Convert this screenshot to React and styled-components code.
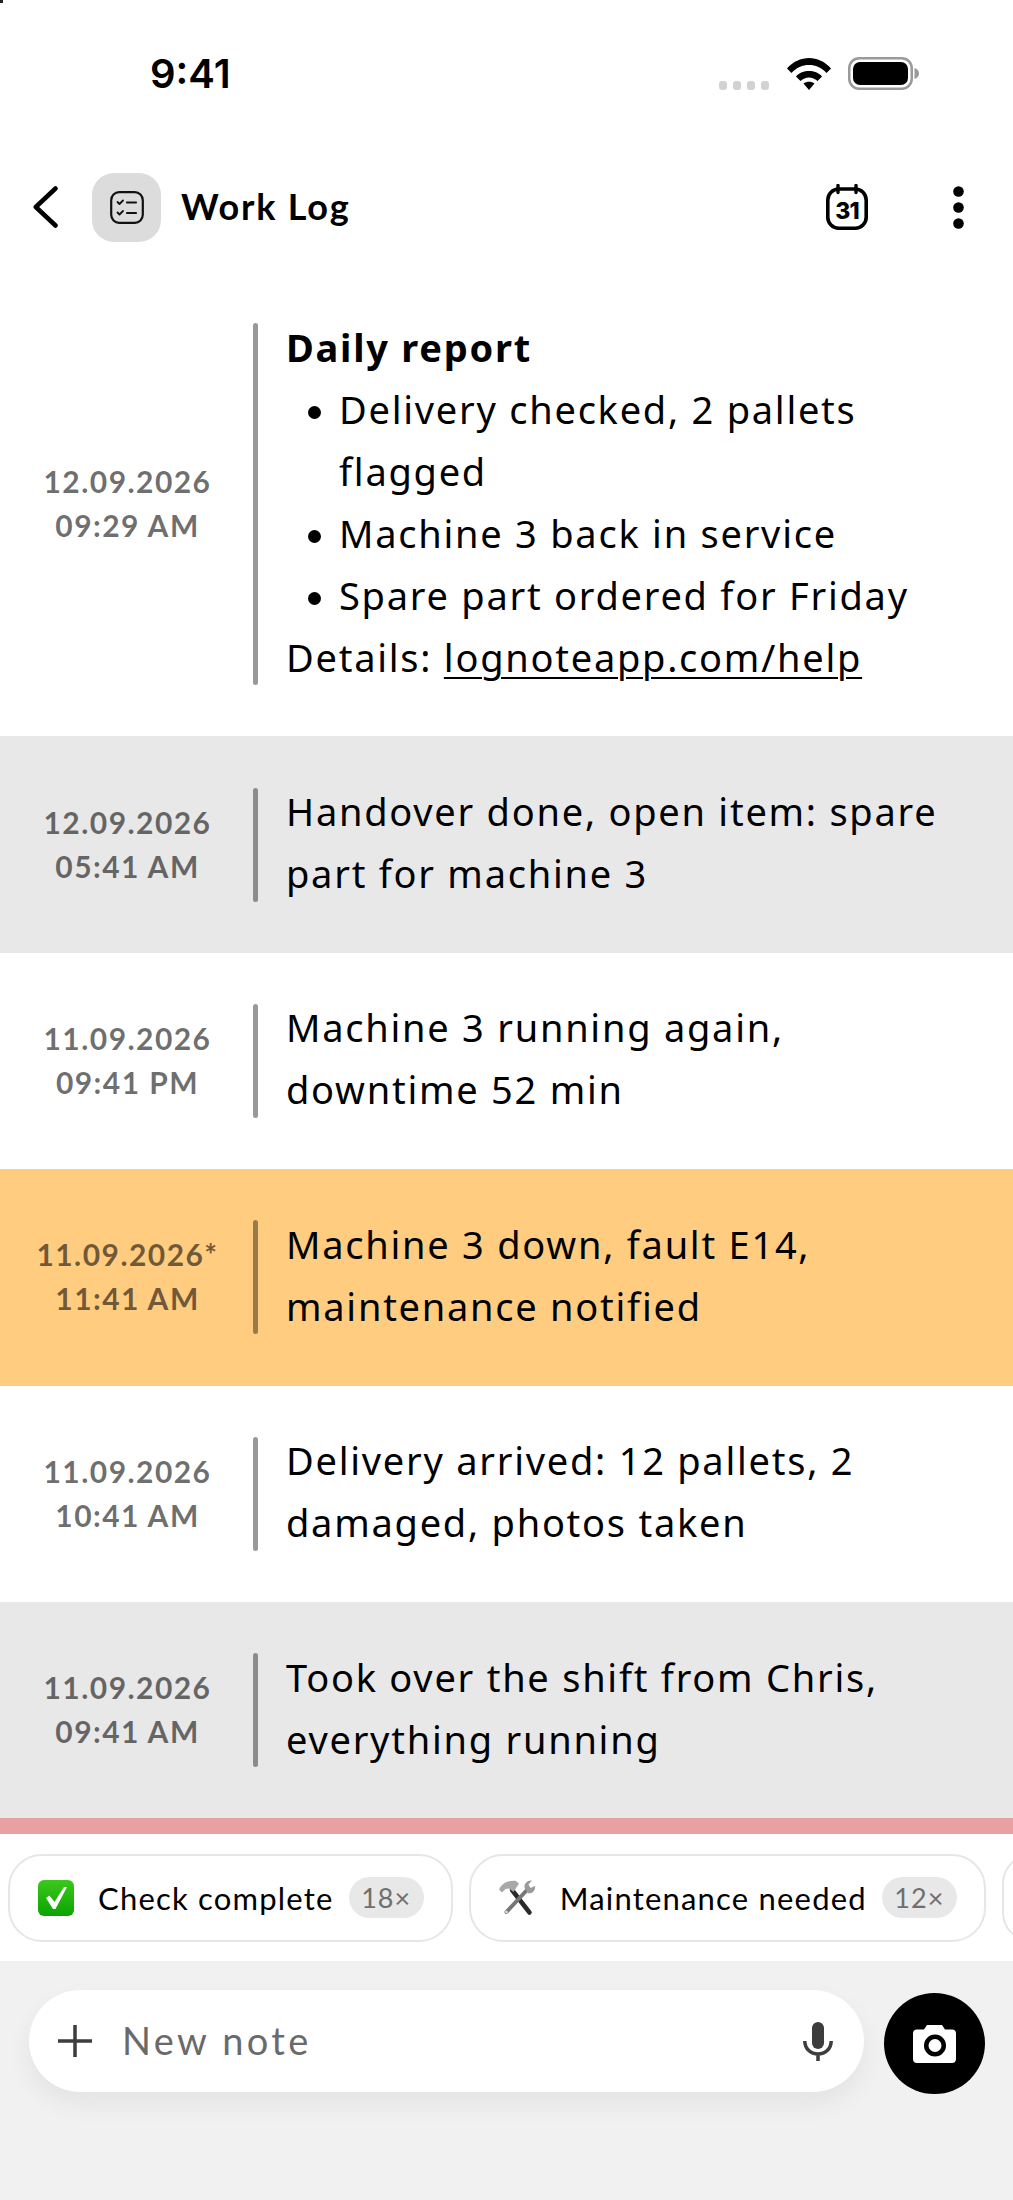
import React from 'react';
import styled, { createGlobalStyle } from 'styled-components';

const font = `Lato, "Noto Sans", sans-serif`;

const Global = createGlobalStyle`
  html, body { margin: 0; padding: 0; background: #f1f1f1; }
  body { font-family: ${font}; color: #000; }
`;

const Page = styled.div`
  position: relative;
  width: 1013px;
  height: 2200px;
  display: flex;
  flex-direction: column;
  overflow: hidden;
  background: #fff;
  &::before {
    content: '';
    position: absolute;
    top: 0;
    left: 0;
    width: 3px;
    height: 3px;
    background: #222;
  }
`;

const StatusBar = styled.div`
  height: 142px;
  box-sizing: border-box;
  padding: 50px 94px 0 150px;
  display: flex;
  justify-content: space-between;
  align-items: flex-start;
`;

const Clock = styled.div`
  font-family: Inter, sans-serif;
  font-weight: 600;
  font-size: 40px;
  line-height: 48px;
  width: 80px;
  white-space: nowrap;
`;

const StatusIcons = styled.div`
  display: flex;
  align-items: flex-start;
  gap: 17px;
  padding-top: 7px;
`;

const Signal = styled.div`
  display: flex;
  gap: 6px;
  margin: 24px 1px 0 0;
`;

const SignalBar = styled.span`
  width: 8px;
  height: 9px;
  border-radius: 3px;
  background: #d2d2d2;
`;

const Header = styled.div`
  height: 130px;
  display: flex;
  align-items: center;
  padding: 0 49px 0 33px;
`;

const BackBtn = styled.div`
  width: 59px;
  display: flex;
`;

const Tile = styled.div`
  width: 69px;
  height: 69px;
  border-radius: 22px;
  background: #dcdcdc;
  display: flex;
  align-items: center;
  justify-content: center;
`;

const Title = styled.div`
  margin: -3px 0 0 20px;
  font-size: 36px;
  font-weight: 700;
  letter-spacing: 1.8px;
  flex: 1;
`;

const HeaderActions = styled.div`
  display: flex;
  align-items: center;
  gap: 85px;
`;

const Row = styled.div`
  display: flex;
  padding: 43.7px 40px 48.7px 0;
  background: ${p => p.$bg || '#fff'};
`;

const Stamp = styled.div`
  width: 253px;
  box-sizing: border-box;
  padding-left: 2px;
  margin-top: 3px;
  flex-shrink: 0;
  align-self: center;
  text-align: center;
  font-size: 30px;
  line-height: 44px;
  font-weight: 700;
  letter-spacing: 1.45px;
  color: rgba(0, 0, 0, 0.58);
`;

const Divider = styled.div`
  width: 5px;
  flex-shrink: 0;
  margin: 7.5px 28px 2.5px 0;
  border-radius: 3px;
  background: rgba(0, 0, 0, 0.4);
`;

const Body = styled.div`
  font-family: "Noto Sans", sans-serif;
  font-size: 38px;
  line-height: 62px;
  letter-spacing: 1.75px;
  flex: 1;
`;

const Heading = styled.div`
  font-weight: 700;
`;

const List = styled.ul`
  list-style: none;
  margin: 0;
  padding: 0;
`;

const Item = styled.li`
  display: flex;
  &::before {
    content: '';
    flex-shrink: 0;
    width: 13px;
    height: 13px;
    border-radius: 50%;
    background: #000;
    margin: 28px 18px 0 22px;
  }
`;

const Link = styled.a`
  color: #000;
  text-decoration: underline;
  text-decoration-thickness: 2px;
  text-underline-offset: 5px;
`;

const RedBar = styled.div`
  height: 16px;
  background: #e8a0a3;
`;

const ChipStrip = styled.div`
  height: 127px;
  box-sizing: border-box;
  padding-left: 8px;
  display: flex;
  align-items: center;
  gap: 16px;
  overflow: hidden;
  background: #fff;
`;

const Chip = styled.div`
  height: 88px;
  box-sizing: border-box;
  flex-shrink: 0;
  display: flex;
  align-items: center;
  padding: 0 27px 0 28px;
  border: 2px solid #e6e6e6;
  border-radius: 34px;
  background: #fff;
`;

const ChipLabel = styled.span`
  font-size: 31px;
  letter-spacing: 1.2px;
  margin: 0 15px 0 24px;
  white-space: nowrap;
`;

const Badge = styled.span`
  height: 41px;
  width: 75px;
  border-radius: 21px;
  background: #e8e8e8;
  color: #6f6f6f;
  font-size: 27px;
  letter-spacing: 1px;
  display: flex;
  align-items: center;
  justify-content: center;
`;

const Composer = styled.div`
  flex: 1;
  display: flex;
  align-items: flex-start;
  background: #f1f1f1;
  padding: 29px 28px 0 29px;
  gap: 20px;
`;

const InputBox = styled.div`
  flex: 1;
  height: 102px;
  border-radius: 51px;
  background: #fff;
  box-shadow: 0 12px 26px rgba(0, 0, 0, 0.06);
  display: flex;
  align-items: center;
  padding: 0 31px 0 29px;
`;

const Placeholder = styled.div`
  flex: 1;
  margin: -3px 0 0 30px;
  font-size: 38px;
  letter-spacing: 3.3px;
  color: #6a6a6a;
`;

const CameraBtn = styled.div`
  width: 101px;
  height: 101px;
  margin-top: 3px;
  border-radius: 50%;
  background: #000;
  display: flex;
  align-items: center;
  justify-content: center;
`;

const entries = [
  { date: '12.09.2026', time: '05:41 AM', text: 'Handover done, open item: spare part for machine 3', bg: '#e8e8e8' },
  { date: '11.09.2026', time: '09:41 PM', text: 'Machine 3 running again, downtime 52 min' },
  { date: '11.09.2026*', time: '11:41 AM', text: 'Machine 3 down, fault E14, maintenance notified', bg: '#ffcc80' },
  { date: '11.09.2026', time: '10:41 AM', text: 'Delivery arrived: 12 pallets, 2 damaged, photos taken' },
  { date: '11.09.2026', time: '09:41 AM', text: 'Took over the shift from Chris, everything running', bg: '#e8e8e8' },
];

const Wifi = () => (
  <svg width="44" height="33" viewBox="0 0 44 33">
    <path d="M0 11.5C6 4.5 14 1 22 1s16 3.500 22 10.500l-4.500 4.500C34.500 10.500 28.500 8 22 8S9.500 10.500 4.500 16z" />
    <path d="M9 19.500C12.500 15.500 17 14 22 14s9.500 1.500 13 5.500L30.500 24C28 21.800 25 20.500 22 20.500S16 21.800 13.500 24z" />
    <path d="M16.500 26.500C18 25.300 20 24.800 22 24.800s4 .5 5.500 1.700L22 33z" />
  </svg>
);

const Battery = () => (
  <svg width="71" height="33" viewBox="0 0 71 33">
    <rect x="1.250" y="1.250" width="62.500" height="30.500" rx="10" fill="none" stroke="#9a9a9a" strokeWidth="2.500" />
    <rect x="5" y="5" width="55" height="23" rx="7" fill="#000" />
    <path d="M66.500 11c2.500.8 4.500 2.800 4.500 5.500s-2 4.700-4.500 5.500z" fill="#9a9a9a" />
  </svg>
);

const BackIcon = () => (
  <svg width="25" height="42" viewBox="0 0 25 42" fill="none" stroke="#000" strokeWidth="4.500" strokeLinecap="round" strokeLinejoin="round">
    <path d="M22.500 2.500L2.800 21l19.700 18.500" />
  </svg>
);

const ChecklistIcon = () => (
  <svg width="34" height="33" viewBox="0 0 34 33" fill="none" stroke="#111" strokeLinecap="round" strokeLinejoin="round">
    <rect x="1.200" y="1.200" width="31.600" height="30.600" rx="8" strokeWidth="2.200" />
    <path d="M7.500 11l2 2 3.500-3.500M7.500 21.500l2 2 3.500-3.500" strokeWidth="1.800" />
    <path d="M17 11.500h9M17 22h9" strokeWidth="2.200" />
  </svg>
);

const CalendarIcon = () => (
  <svg width="42" height="46" viewBox="0 0 42 46">
    <rect x="1.800" y="5" width="38.400" height="39.200" rx="11" fill="none" stroke="#000" strokeWidth="3.600" />
    <path d="M12 1.500v7M30 1.500v7" stroke="#000" strokeWidth="3.400" strokeLinecap="round" />
    <text x="21" y="34.500" textAnchor="middle" fontFamily="Inter, sans-serif" fontWeight="800" fontSize="23" letterSpacing="-1">31</text>
  </svg>
);

const DotsIcon = () => (
  <svg width="11" height="43" viewBox="0 0 11 43">
    <circle cx="5.500" cy="5.500" r="5.300" />
    <circle cx="5.500" cy="21.500" r="5.300" />
    <circle cx="5.500" cy="37.500" r="5.300" />
  </svg>
);

const CheckEmoji = () => (
  <svg width="36" height="36" viewBox="0 0 36 36">
    <defs>
      <linearGradient id="chk" x1="0" y1="0" x2="0" y2="1">
        <stop offset="0" stopColor="#3cc81e" />
        <stop offset="1" stopColor="#0aa400" />
      </linearGradient>
    </defs>
    <rect width="36" height="36" rx="6" fill="url(#chk)" />
    <path d="M8 18l3.500-2.500 5 6.500L26 7h3L17.500 29h-2.500z" fill="#fff" />
  </svg>
);

const ToolsEmoji = () => (
  <svg width="37" height="36" viewBox="0 0 37 36">
    <path d="M13 10L30.500 32.500" stroke="#2a2a2a" strokeWidth="4.500" strokeLinecap="round" />
    <path d="M27.500 10.500L7.500 32" stroke="#777" strokeWidth="4" strokeLinecap="round" />
    <path d="M0 9.500C3 3 10 0 16.500 .8L20 3.500l-5.500 8.500-4.500-3.500-3.500.5L3 12.500z" fill="#a8a8a8" />
    <path d="M25.500 7.500c-.5-4 3-7.500 7.500-7L29.500 4.500l2 3.500 4.500-2c.8 4.500-3 8.500-7.500 7z" fill="#9a9a9a" />
    <circle cx="7.500" cy="32" r="1.300" fill="#e4e4e4" />
  </svg>
);

const PlusIcon = () => (
  <svg width="34" height="32" viewBox="0 0 34 32" fill="none" stroke="#3d3d3d" strokeWidth="3.500">
    <path d="M17 0v32M0 16h34" />
  </svg>
);

const MicIcon = () => (
  <svg width="30" height="39" viewBox="0 0 30 39">
    <rect x="9" y="0" width="12" height="27" rx="6" fill="#3d3d3d" />
    <path d="M1.800 19C1.800 27 8 32 15 32s13.200-5 13.200-13M15 32v7" fill="none" stroke="#3d3d3d" strokeWidth="3.500" />
  </svg>
);

const CameraIcon = () => (
  <svg width="43" height="38" viewBox="0 0 43 38">
    <path fillRule="evenodd" fill="#fff" d="M14 0h15l3 4.500h7c2.500 0 4 1.500 4 4V34c0 2.500-1.500 4-4 4H4c-2.500 0-4-1.500-4-4V8.500c0-2.500 1.500-4 4-4h7zM22 9.500a11 11 0 1 0 0 22 11 11 0 0 0 0-22zm0 4.500a6.500 6.500 0 1 1 0 13 6.500 6.500 0 0 1 0-13z" />
  </svg>
);

export default function App() {
  return (
    <Page>
      <Global />
      <StatusBar>
        <Clock>9:41</Clock>
        <StatusIcons>
          <Signal>
            <SignalBar /><SignalBar /><SignalBar /><SignalBar />
          </Signal>
          <Wifi />
          <Battery />
        </StatusIcons>
      </StatusBar>

      <Header>
        <BackBtn><BackIcon /></BackBtn>
        <Tile><ChecklistIcon /></Tile>
        <Title>Work Log</Title>
        <HeaderActions>
          <CalendarIcon />
          <DotsIcon />
        </HeaderActions>
      </Header>

      <Row>
        <Stamp>12.09.2026<br />09:29 AM</Stamp>
        <Divider />
        <Body>
          <Heading>Daily report</Heading>
          <List>
            <Item><span>Delivery checked, 2 pallets flagged</span></Item>
            <Item><span>Machine 3 back in service</span></Item>
            <Item><span>Spare part ordered for Friday</span></Item>
          </List>
          Details: <Link>lognoteapp.com/help</Link>
        </Body>
      </Row>

      {entries.map(e => (
        <Row key={e.date + e.time} $bg={e.bg}>
          <Stamp>{e.date}<br />{e.time}</Stamp>
          <Divider />
          <Body>{e.text}</Body>
        </Row>
      ))}

      <RedBar />

      <ChipStrip>
        <Chip>
          <CheckEmoji />
          <ChipLabel>Check complete</ChipLabel>
          <Badge>18×</Badge>
        </Chip>
        <Chip>
          <ToolsEmoji />
          <ChipLabel>Maintenance needed</ChipLabel>
          <Badge>12×</Badge>
        </Chip>
        <Chip />
      </ChipStrip>

      <Composer>
        <InputBox>
          <PlusIcon />
          <Placeholder>New note</Placeholder>
          <MicIcon />
        </InputBox>
        <CameraBtn><CameraIcon /></CameraBtn>
      </Composer>
    </Page>
  );
}
